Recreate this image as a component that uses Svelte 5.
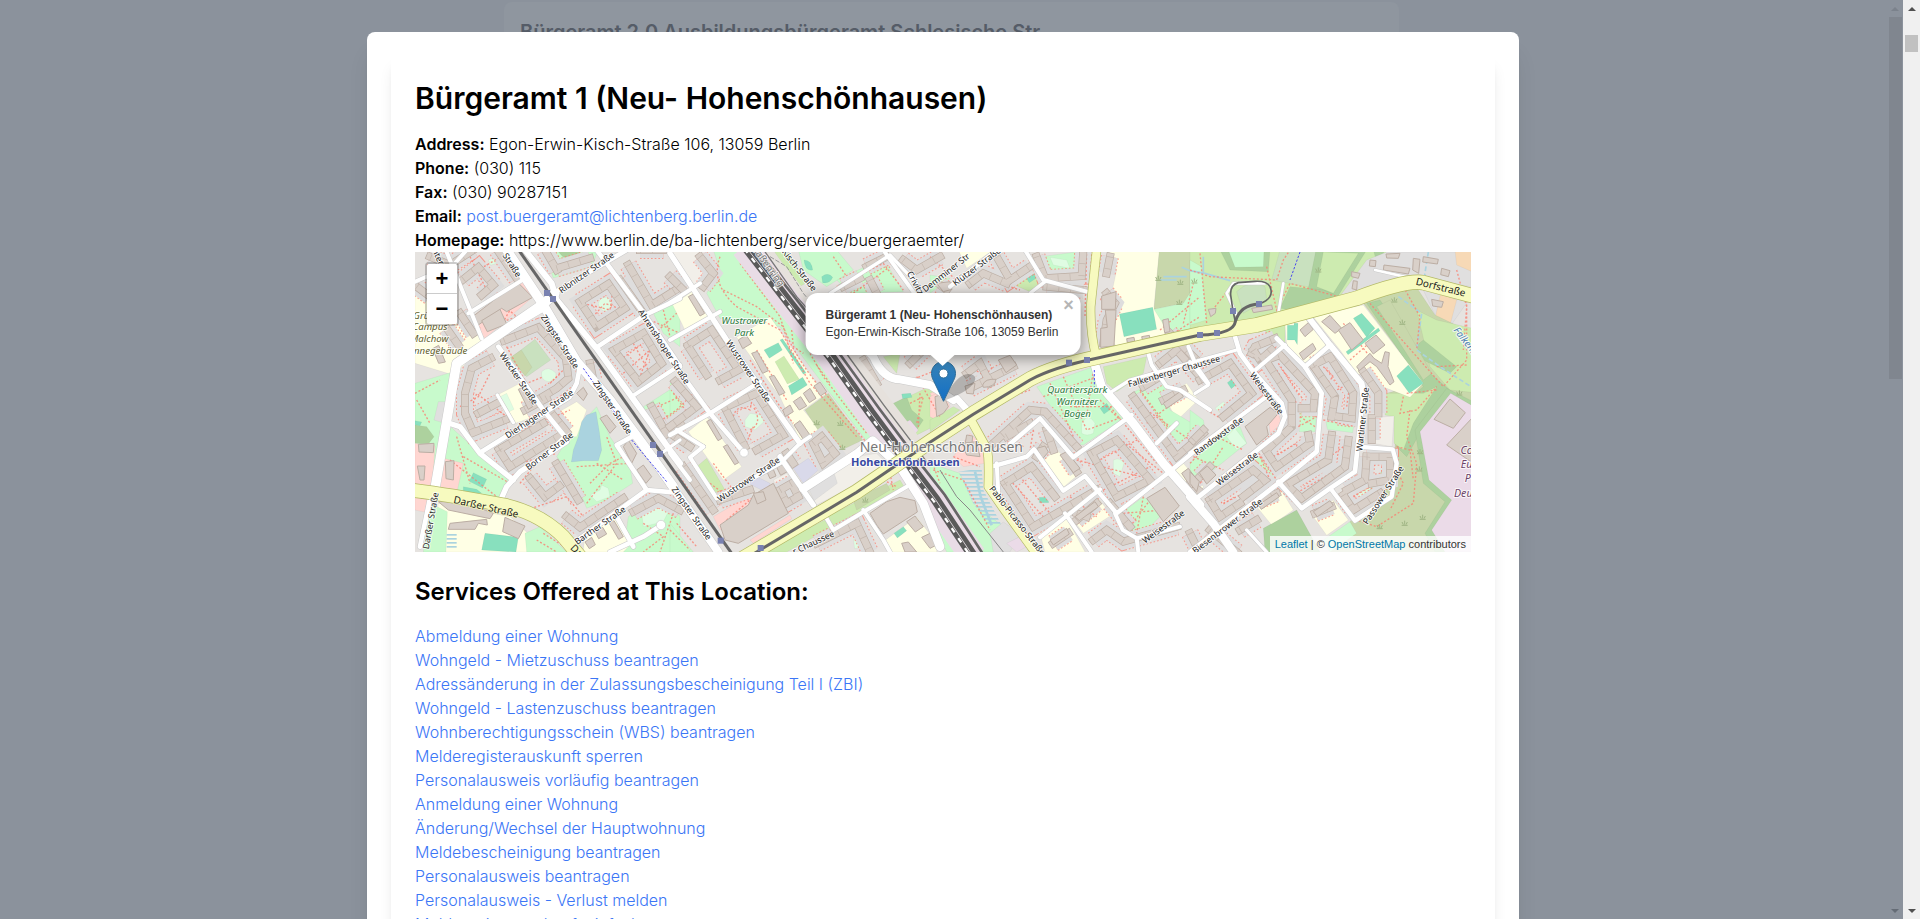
<script>
  const services = [
    'Abmeldung einer Wohnung',
    'Wohngeld - Mietzuschuss beantragen',
    'Adressänderung in der Zulassungsbescheinigung Teil I (ZBI)',
    'Wohngeld - Lastenzuschuss beantragen',
    'Wohnberechtigungsschein (WBS) beantragen',
    'Melderegisterauskunft sperren',
    'Personalausweis vorläufig beantragen',
    'Anmeldung einer Wohnung',
    'Änderung/Wechsel der Hauptwohnung',
    'Meldebescheinigung beantragen',
    'Personalausweis beantragen',
    'Personalausweis - Verlust melden',
    'Melderegisterauskunft einfach'
  ];

  // The map is drawn tile by tile; every tile is 780 units wide.
  const tile = (i) => `translate(${i * 780} 0)`;

  const colours = {
    land: '#f2efe9', park: '#c8facc', grass: '#cdebb0', wood: '#add19e', scrub: '#c8d7ab',
    school: '#ffffe5', pitch: '#88e0be', water: '#aad3df', retail: '#ffd6d1', plots: '#c9e1bf',
    works: '#ebdbe8', house: '#d9d0c9', farm: '#f7d9b6', lilac: '#d9d9ea', grey: '#e0dfdf', play: '#dffce2'
  };

  const areas = [
    [
      ['school', 'M15,135 L60,150 L235,280 L130,375 L15,340Z'],
      ['park', 'M15,400 L120,368 L110,520 L210,610 L310,690 L270,745 L15,720Z'],
      ['wood', 'M15,525 L50,530 L72,560 L55,582 L15,580Z'],
      ['pitch', 'M15,512 L35,516 L30,527 L15,524Z'],
      ['retail', 'M15,580 L75,588 L62,790 L15,780Z'],
      ['retail', 'M90,622 L160,640 L140,730 L80,720Z'],
      ['grey', 'M85,455 L108,455 L105,520 L72,510Z'],
      ['retail', 'M200,190 L340,90 L375,135 L225,265 L200,240Z'],
      ['school', 'M262,435 L330,400 L385,455 L400,490 L310,522Z'],
      ['plots', 'M300,325 L375,268 L422,330 L350,380Z'],
      ['scrub', 'M302,322 L334,300 L366,352 L345,378Z'],
      ['play', 'M395,365 Q415,345 438,370 Q440,395 415,395 Q390,390 395,365Z'],
      ['play', 'M270,440 L290,430 L312,478 L292,488Z'],
      ['park', 'M560,470 L600,560 L660,650 L668,700 L590,750 L530,775 L500,700 L440,620 L480,555Z'],
      ['school', 'M440,490 L500,455 L530,480 L500,560 L475,560Z'],
      ['water', 'M530,495 L558,485 L568,545 L575,600 L565,632 L520,632 L484,636 L490,600 L505,560 L515,515Z'],
      ['play', 'M540,735 L570,720 L575,705 L595,715 L600,740 L560,755Z'],
      ['pitch', 'M190,668 L230,688 L218,714 L178,694Z'],
      ['pitch', 'M160,710 L200,718 L215,730 L160,725Z'],
      ['school', 'M85,760 L300,800 L375,870 L380,906 L70,906Z'],
      ['park', 'M60,760 L112,785 L108,906 L40,906Z'],
      ['park', 'M345,850 L390,830 L470,906 L350,906Z'],
      ['pitch', 'M225,850 L325,862 L318,906 L215,900Z'],
      ['park', 'M400,0 L562,6 L545,50 L430,84Z'],
      ['wood', 'M440,0 L515,0 L500,24 L460,22Z'],
      ['park', 'M730,190 L810,145 L810,290 L760,250Z'],
      ['park', 'M700,470 L810,400 L810,560 L760,575Z'],
      ['park', 'M655,800 L720,750 L795,780 L810,800 L810,906 L640,906Z'],
      ['play', 'M695,790 L740,755 L780,775 L760,815 L700,830Z'],
      ['school', 'M525,850 L620,800 L665,880 L640,906 L520,906Z'],
      ['play', 'M565,160 Q570,138 598,142 Q615,165 592,185 Q565,182 565,160Z'],
      ['play', 'M235,30 L252,24 L260,40 L242,46Z']
    ],
    [
      ['land', 'M0,0 L90,0 L130,50 L70,120 L30,60Z'],
      ['park', 'M130,0 L220,0 L480,345 L640,590 L610,600 L480,430 L330,230 L250,215 L150,205 L110,130 L150,60Z'],
      ['school', 'M8,165 L70,122 L120,200 L45,240Z'],
      ['school', 'M200,262 L300,200 L440,400 L470,430 L400,480 L450,540 L390,570 L330,440Z'],
      ['grass', 'M315,335 L342,318 L388,388 L352,402Z'],
      ['pitch', 'M282,300 L325,278 L337,300 L298,325Z'],
      ['pitch', 'M355,408 L398,382 L412,405 L365,435Z'],
      ['pitch', 'M330,270 L338,266 L408,368 L400,373Z'],
      ['pitch', 'M120,62 L134,54 L146,74 L130,80Z'],
      ['scrub', 'M405,480 L475,430 L578,570 L490,612Z'],
      ['park', 'M0,400 L50,385 L90,470 L0,545Z'],
      ['school', 'M55,545 L110,500 L215,650 L160,690Z'],
      ['grass', 'M80,650 L110,625 L165,720 L130,730Z'],
      ['land', 'M310,690 L350,670 L410,750 L380,770 L340,760Z'],
      ['lilac', 'M370,655 L415,625 L445,660 L400,700Z'],
      ['lilac', 'M235,700 L260,680 L300,700 L290,728Z'],
      ['land', 'M415,720 L560,620 L620,610 L660,650 L440,765Z'],
      ['grey', 'M418,720 L492,668 L502,700 L432,752Z'],
      ['retail', 'M130,800 L240,735 L255,760 L150,840Z'],
      ['retail', 'M240,870 L360,795 L365,806 L250,880Z'],
      ['grass', 'M470,800 L690,690 L705,715 L590,775 L480,830Z'],
      ['scrub', 'M550,750 L650,700 L660,720 L560,780Z'],
      ['grass', 'M270,906 L465,810 L480,835 L350,906Z'],
      ['school', 'M640,875 L740,800 L800,880 L800,906 L660,906Z'],
      ['pitch', 'M672,850 L700,830 L710,842 L682,864Z'],
      ['park', 'M700,660 L810,760 L880,906 L830,906 L780,800Z'],
      ['park', 'M500,90 L640,25 L700,125 L540,130Z'],
      ['park', 'M385,0 L500,0 L550,60 L470,110 L400,60Z'],
      ['grass', 'M310,0 L350,0 L410,98 L385,112Z'],
      ['pitch', 'M402,30 Q425,30 428,60 Q405,65 402,30Z'],
      ['pitch', 'M455,80 Q475,65 488,82 Q480,102 458,98Z'],
      ['park', 'M0,820 L70,906 L0,906Z'],
      ['grass', 'M640,320 L690,310 L680,370Z'],
      ['grass', 'M650,470 L800,400 L810,520 L730,560Z'],
      ['wood', 'M650,470 L710,440 L725,480 L760,510 L740,540 L690,500Z'],
      ['retail', 'M780,430 L810,418 L810,490Z'],
      ['works', 'M690,525 L720,510 L745,540 L720,570Z'],
      ['pitch', 'M695,432 L722,430 L726,442 L698,446Z'],
      ['play', 'M225,510 L240,490 L272,495 L282,515 L255,540 L225,530Z'],
      ['play', 'M550,868 L570,864 L572,892 L554,896Z']
    ],
    [
      ['school', 'M85,0 L190,0 L110,55Z'],
      ['park', 'M0,75 L60,85 L0,130Z'],
      ['grass', 'M240,100 L300,55 L340,100 L300,125Z'],
      ['pitch', 'M283,75 L305,60 L318,85 L298,98Z'],
      ['park', 'M335,20 L445,5 L450,72 L360,76Z'],
      ['play', 'M360,22 L410,30 L420,55 L370,45Z'],
      ['school', 'M535,0 L688,6 L672,170 L740,290 L560,290 L515,230 L530,200 L560,60Z'],
      ['pitch', 'M568,192 L668,172 L680,238 L582,260Z'],
      ['scrub', 'M688,0 L810,0 L810,100 L760,160 L672,178Z'],
      ['park', 'M672,178 L760,160 L810,80 L810,235 L720,255Z'],
      ['park', 'M320,410 L490,350 L500,400 L590,500 L460,585 L430,580 L370,480Z'],
      ['play', 'M455,520 Q475,485 495,520 L490,550 Q470,560 455,550Z'],
      ['pitch', 'M510,475 L530,460 L542,478 L522,492Z'],
      ['grass', 'M130,375 L170,345 L205,375 L160,410Z'],
      ['retail', 'M0,440 L40,420 L60,470 L20,510 L0,500Z'],
      ['grass', 'M0,510 L70,470 L90,480 L0,545Z'],
      ['retail', 'M70,620 L120,550 L160,590 L165,640 L100,650Z'],
      ['park', 'M0,640 L90,670 L130,760 L215,826 L200,906 L120,906 L0,730Z'],
      ['grass', 'M520,350 L650,320 L640,370 L560,425 L530,400Z'],
      ['school', 'M340,630 L380,600 L455,665 L400,712Z'],
      ['school', 'M430,810 L500,740 L545,795 L460,850Z'],
      ['school', 'M330,850 L410,805 L465,906 L345,906Z'],
      ['school', 'M705,440 L770,400 L805,450 L740,512Z'],
      ['school', 'M725,670 L760,640 L820,710 L800,750 L760,720Z'],
      ['park', 'M605,430 L690,385 L715,430 L720,480 L820,540 L780,612 L690,520Z'],
      ['park', 'M560,800 L640,740 L700,790 L640,850 L580,840Z'],
      ['play', 'M550,630 Q570,620 582,640 L570,680 L550,670Z'],
      ['pitch', 'M328,742 L356,742 L356,758 L328,758Z'],
      ['grey', 'M180,850 L220,816 L270,850 L240,906 L190,906Z'],
      ['works', 'M230,880 L270,860 L290,890 L260,906Z']
    ],
    [
      ['grass', 'M0,0 L590,0 L580,50 L450,150 L340,190 L0,250Z'],
      ['park', 'M0,30 L35,50 L50,210 L0,225Z'],
      ['wood', 'M90,0 L240,0 L235,65 L120,60Z'],
      ['park', 'M115,0 L222,0 L220,50 L135,52Z'],
      ['plots', 'M270,0 L380,0 L362,112 L245,90Z'],
      ['wood', 'M378,0 L530,0 L440,145 L355,115Z'],
      ['grass', 'M400,6 L505,10 L430,130 L380,110Z'],
      ['wood', 'M300,110 L400,120 L470,150 L345,185 L270,175Z'],
      ['plots', 'M140,125 Q180,85 225,110 L230,150 L160,190Z'],
      ['wood', 'M550,0 L582,0 L578,25 L560,35Z'],
      ['grey', 'M530,30 L590,6 L843,6 L843,110 L665,80 L560,115 L450,138Z'],
      ['farm', 'M795,0 L870,0 L870,75 L800,45Z'],
      ['grey', 'M700,120 L843,140 L780,230 L735,195Z'],
      ['farm', 'M752,130 L800,150 L780,225 L735,205Z'],
      ['scrub', 'M520,160 L675,105 L735,195 L870,260 L870,906 L420,906 L480,815 L615,600 L615,500 L590,430 L700,400Z'],
      ['grass', 'M680,180 L740,210 L870,240 L870,430 L780,420 L720,350Z'],
      ['wood', 'M675,290 L700,270 L800,350 L780,370 L700,330Z'],
      ['wood', 'M530,160 L570,150 L720,370 L790,430 L760,470 L700,530 L650,620 L620,590 L640,460 L700,410Z'],
      ['scrub', 'M560,170 L600,150 L725,370 L700,390Z'],
      ['grass', 'M600,430 L700,430 L740,410 L670,520 L640,600 L612,580 L612,500 L585,495 L585,430Z'],
      ['wood', 'M770,415 L870,465 L870,906 L735,906 L705,850 L765,755 L700,700 L675,540Z'],
      ['works', 'M782,430 L870,480 L870,906 L765,906 L725,840 L785,750 L717,690 L690,545Z'],
      ['school', 'M365,195 L520,165 L700,400 L660,442 L590,415 L500,370 L450,300Z'],
      ['school', 'M285,225 L350,205 L430,280 L340,342 L290,285Z'],
      ['grass', 'M220,230 L285,220 L285,280 L240,270Z'],
      ['pitch', 'M292,226 L312,226 L312,220 L324,220 L322,284 L314,270 L292,270Z'],
      ['pitch', 'M490,205 L515,190 L555,235 L530,262Z'],
      ['pitch', 'M468,305 L565,234 L570,242 L474,314Z'],
      ['pitch', 'M620,378 L655,345 L700,400 L658,430Z'],
      ['land', 'M555,503 L612,498 L606,590 L550,580Z'],
      ['park', 'M325,488 L380,488 L375,545 L328,545Z'],
      ['park', 'M408,515 L492,520 L488,548 L412,538Z'],
      ['park', 'M0,640 L90,540 L150,530 L170,580 L70,660 L0,680Z'],
      ['park', 'M190,625 L220,618 L260,680 L240,690Z'],
      ['play', 'M110,560 L135,535 L170,580 L140,600Z'],
      ['park', 'M0,480 L40,510 L50,560 L0,590Z'],
      ['school', 'M200,770 L270,715 L310,780 L245,825Z'],
      ['wood', 'M220,835 L320,780 L390,906 L225,906Z'],
      ['school', 'M370,800 L430,750 L475,810 L410,856Z'],
      ['park', 'M400,870 L480,815 L500,850 L420,906Z'],
      ['retail', 'M235,500 L265,490 L275,520 L240,550Z'],
      ['school', 'M0,680 L30,700 L20,740 L0,740Z'],
      ['pitch', 'M112,398 L125,388 L138,404 L124,416Z'],
      ['play', 'M75,475 L100,455 L112,470 L90,490Z'],
      ['play', 'M500,735 L535,708 L542,716 L512,740Z'],
      ['play', 'M437,378 L448,382 L460,406 L440,400Z']
    ]
  ];

  // Centre lines of apartment blocks.
  const blocks = [
    [
      'M160,88 L205,52 L250,105 L215,135', 'M262,0 L320,85', 'M190,0 L120,45 L60,20', 'M20,110 L60,140', 'M110,235 L145,285', 'M150,190 L190,250',
      'M242,325 L185,355 L165,430 L165,490 L190,548 L285,510', 'M205,490 L265,458', 'M282,272 L385,232 L468,325 L475,385 L440,415 L385,448',
      'M345,480 L410,445', 'M268,598 L400,520', 'M268,600 L300,650 L445,560', 'M425,490 L470,545',
      'M360,685 L405,740 L448,708', 'M440,642 L505,750', 'M470,800 L510,832 L640,745', 'M440,55 L540,25', 'M405,0 L440,60',
      'M510,155 L595,102 L645,175 L560,230Z', 'M612,300 L700,250 L755,340 L685,395Z', 'M655,45 L725,165 L800,118', 'M690,0 L760,0',
      'M725,470 L770,552 L810,520', 'M670,785 L745,745 L810,780', 'M540,340 L550,390', 'M630,90 L700,190'
    ],
    [
      'M0,80 L40,120', 'M90,20 L130,70 L100,110', 'M55,285 L125,240 L205,360 L150,390', 'M55,290 L110,375', 'M15,395 L80,470 L0,530', 'M170,470 L260,430 L340,555 L260,600', 'M168,480 L225,590',
      'M15,560 L60,590', 'M40,650 L130,780', 'M150,750 L240,720', 'M350,610 L370,640', 'M430,580 L455,560 L495,610 L460,640Z', 'M330,720 L365,700 L385,740 L350,760Z',
      'M440,880 L560,820 L600,906', 'M590,50 L650,20', 'M520,110 L570,85', 'M600,90 L620,130', 'M720,340 L760,300', 'M580,330 L620,400', 'M700,30 L740,60 L810,20', 'M540,180 L570,240'
    ],
    [
      'M30,105 L50,120', 'M120,100 L160,70 L230,100', 'M200,20 L240,90 L300,50', 'M320,20 L345,85 L455,78 L460,0', 'M350,110 L460,120', 'M540,20 L530,70', 'M530,130 L555,160 L530,210 L520,280',
      'M110,370 L150,340 L180,400', 'M120,415 L250,350', 'M190,580 L300,480 L345,485 L440,590', 'M230,560 L300,520', 'M350,540 L370,600', 'M340,590 L320,620',
      'M225,700 L305,650 L375,740', 'M225,700 L310,830 L500,720', 'M485,610 L560,570 L660,690 L560,740Z', 'M410,620 L440,665', 'M640,410 L690,380', 'M610,440 L740,620 L820,550', 'M690,340 L740,300 L810,380', 'M720,250 L800,330',
      'M700,450 L760,420', 'M490,870 L530,840 L580,875 L740,830', 'M370,880 L415,850', 'M440,810 L500,760', 'M440,790 L470,800', 'M540,760 L600,830'
    ],
    [
      'M185,310 L195,290 L255,265', 'M190,300 L210,330 L245,300', 'M30,390 L120,340 L185,430 L100,500', 'M230,330 L270,315 L375,430 L370,475 L335,475', 'M230,335 L305,450 L305,530 L230,600', 'M230,605 L260,650 L360,580 L355,555',
      'M370,345 L420,320 L490,430 L485,505 L445,500', 'M372,350 L435,440 L425,500', 'M425,555 L415,630 L290,705 L335,745 L465,650 L475,570', 'M520,365 L565,430 L565,490', 'M545,505 L545,570',
      'M530,620 L600,620 L600,690 L545,700', 'M530,620 L525,690 L470,720', 'M460,735 L490,780 L570,730', 'M60,750 L190,660 L225,690 L160,740', 'M60,750 L90,800 L150,760', 'M0,850 L20,890', 'M150,840 L200,810',
      'M30,680 L60,650', 'M10,570 L40,540', 'M60,840 L140,906', 'M375,790 L425,770', 'M210,750 L260,730', 'M0,700 L25,720'
    ]
  ];

  // Detached buildings drawn to their outline.
  const houses = [
    [
      'M188,200 L322,96 L368,142 L290,185 L275,175 L205,225Z', 'M215,212 L270,178 L290,222 L232,245Z', 'M85,755 L160,755 L250,790 L240,806 L115,780Z', 'M120,820 L230,808 L232,825 L205,820 L195,838 L115,838Z', 'M285,802 L345,828 L325,866 L278,845Z', 'M22,648 L45,648 L42,690 L30,690Z', 'M106,635 L132,632 L130,690 L108,686Z',
      'M325,418 L338,412 L368,470 L355,478Z', 'M500,430 L520,412 L532,432 L520,452Z', 'M570,505 L590,495 L618,530 L600,550Z', 'M640,590 L655,570 L680,610 L665,640Z', 'M680,660 L700,645 L725,680 L708,700Z', 'M525,876 L545,862 L556,884 L538,896Z', 'M555,845 L578,832 L590,852 L566,866Z', 'M598,820 L612,812 L640,860 L626,868Z', 'M25,583 L72,580 L70,608 L27,606Z', 'M68,296 L86,286 L106,336 L86,340Z'
    ],
    [
      'M55,140 L70,132 L104,190 L90,198Z', 'M205,270 L228,255 L245,280 L218,296Z', 'M245,310 L262,304 L295,362 L278,370Z', 'M298,380 L312,376 L345,428 L328,436Z', 'M370,455 L392,440 L410,468 L388,480Z', 'M400,430 L420,415 L438,445 L418,458Z', 'M432,408 L450,396 L470,425 L452,438Z', 'M372,525 L390,512 L420,555 L400,568Z', 'M338,480 L360,465 L370,485 L346,500Z',
      'M110,515 L122,508 L156,565 L144,572Z', 'M160,590 L172,584 L206,638 L194,644Z', 'M150,825 L235,765 L250,735 L310,700 L355,790 L205,880 L165,870Z', 'M250,730 L280,725 L288,750 L262,762Z', 'M292,668 L310,658 L318,678 L300,686Z', 'M320,652 L340,642 L352,665 L332,676Z', 'M600,790 L650,755 L690,742 L735,752 L742,786 L640,852 L620,825Z', 'M710,815 L735,798 L760,830 L736,846Z', 'M755,862 L780,850 L800,885 L780,895Z', 'M695,880 L715,876 L740,906 L705,906Z', 'M615,432 L632,430 L630,445Z'
    ],
    [
      'M105,408 L135,400 L130,432 L110,430Z', 'M158,405 Q165,385 198,388 Q195,412 160,412Z', 'M205,330 L240,316 L260,345 L228,368Z', 'M15,440 L40,432 L55,470 L40,490 L20,500Z', 'M515,138 L558,125 L556,178 L515,178Z', 'M526,180 L558,180 L552,288 L512,292 L512,235 L532,232Z', 'M698,210 L715,206 L720,245 L704,248Z',
      'M110,555 L128,558 L126,580 L106,578Z', 'M95,580 L140,575 L150,620 L110,615Z', 'M320,595 L345,588 L355,606 L338,626Z', 'M390,615 L410,605 L450,655 L430,668Z', 'M435,800 L495,755 L505,770 L448,812Z', 'M360,870 L410,835 L418,852 L370,885Z', 'M650,745 L705,712 L748,768 L700,815Z', 'M755,670 L775,655 L805,695 L785,715Z', 'M700,460 L750,425 L760,440 L710,475Z', 'M590,266 L612,262 L614,274 L592,278Z', 'M635,260 L658,256 L660,268 L638,272Z', 'M20,100 L60,95 L66,118 L40,125Z'
    ],
    [
      'M395,215 L420,196 L455,235 L435,250Z', 'M445,240 L480,218 L520,270 L485,300Z', 'M525,280 L558,255 L585,285 L550,312Z', 'M500,350 L540,310 L552,325 L575,340 L585,305 L598,308 L594,350 L612,395 L600,405 L560,350 L540,335 L508,362Z', 'M330,240 L355,218 L370,238 L345,260Z', 'M328,310 L368,280 L378,298 L340,330Z',
      'M165,530 L240,472 L265,490 L230,530 L235,555 L200,585Z', 'M732,508 L780,447 L826,488 L790,535Z', 'M770,585 L850,500 L850,640Z', 'M370,785 L420,752 L430,766 L382,800Z', 'M205,765 L260,728 L268,740 L214,778Z', 'M28,668 L52,648 L78,675 L50,702Z', 'M0,665 L28,695 L20,725 L0,700Z',
      'M588,12 L630,10 L625,25 L590,24Z', 'M582,45 L660,55 L655,72 L580,60Z', 'M540,30 L558,32 L556,50 L538,48Z', 'M485,65 L510,70 L505,85 L485,80Z', 'M490,92 L502,94 L500,120 L486,116Z', 'M700,20 L745,28 L742,42 L698,36Z', 'M755,55 L780,62 L775,80 L752,74Z', 'M670,25 L690,28 L686,70 L668,60Z', 'M725,148 L760,155 L755,172 L728,168Z', 'M185,175 L245,165 L248,178 L190,188Z', 'M55,178 L78,175 L76,190 L62,200Z'
    ]
  ];

  // White streets: width, path.
  const streets = [
    [
      [28, 'M75,715 L140,340 L235,275 L405,158 L435,130'], [12, 'M110,6 L215,265'], [12, 'M15,95 L130,45 L170,0'], [12, 'M175,190 L345,85'], [18, 'M345,0 L425,100 L440,150 L560,295 L665,440 L780,600 L810,640'],
      [28, 'M290,0 L400,165 L500,335 L600,450 L700,585 L790,710'], [14, 'M430,130 L650,0'], [14, 'M560,0 L590,40 L705,195 L790,320 L810,350'], [14, 'M560,292 L705,195 L810,145'], [12, 'M665,440 L810,345'],
      [14, 'M265,290 L400,480 L465,560 L440,585'], [14, 'M210,608 L478,442 L500,400 L510,350'], [10, 'M262,435 L310,518'], [10, 'M235,275 L290,245 L400,180'], [16, 'M125,522 L150,530 L210,610 L310,690'], [16, 'M272,750 L290,710 L330,665 L470,575'],
      [14, 'M665,560 L620,585 L710,720 L800,728'], [14, 'M490,880 L710,720'], [14, 'M600,906 L700,860 L755,825'], [14, 'M620,800 L670,890'], [14, 'M60,745 L30,890'], [10, 'M740,620 L810,570']
    ],
    [
      [16, 'M0,10 L170,270 L390,580'], [12, 'M0,158 L90,100'], [12, 'M0,270 L150,185'], [14, 'M0,325 L120,490 L222,608'], [13, 'M0,555 L120,490 L270,395'], [12, 'M100,590 L60,622 L140,745 L330,640 L390,580 L420,560'], [12, 'M20,540 L100,590'],
      [26, 'M400,715 L560,612 L608,572 L690,650 L760,760 L810,890'], [16, 'M330,620 L430,765'], [12, 'M455,780 L490,840 L590,780 L710,710'], [12, 'M580,780 L640,870 L660,906'], [24, 'M0,700 L120,870 L145,906'], [24, 'M590,300 L610,320 Q640,388 690,388 L780,405 L850,450'], [12, 'M0,610 L60,690'], [10, 'M480,130 L660,15 L740,100'], [12, 'M640,0 L740,140']
    ],
    [
      [12, 'M60,110 L200,0'], [12, 'M285,0 L340,90 L470,125'], [10, 'M300,130 L345,95'], [26, 'M495,345 L515,410 L610,520 L700,640 L810,765'], [13, 'M240,582 L330,505 L430,622 L605,495'], [13, 'M185,650 L290,620 L312,598 L400,722 L465,678 L560,790 L710,672 L810,590'], [12, 'M200,640 L205,730'], [12, 'M330,862 L510,718'], [12, 'M405,790 L485,906'],
      [12, 'M555,790 L578,840 L620,865 L750,830'], [10, 'M545,425 L600,390 L810,330 L920,300'], [12, 'M655,310 L665,345 L710,410 L750,420 L840,480'], [10, 'M600,500 L690,615'], [12, 'M775,290 L800,350 L835,400'], [20, 'M80,445 L130,500'], [12, 'M620,865 L625,906'], [13, 'M740,520 L680,580']
    ],
    [
      [14, 'M135,260 L150,310 L190,365 L275,460 L285,500 L265,550 L20,745'], [12, 'M190,365 L285,285'], [14, 'M260,265 L345,350 L395,430 L380,605 L265,700 L0,906'], [14, 'M345,350 L420,285'], [18, 'M350,195 L420,285 L515,400 L520,440'], [14, 'M520,430 L495,665 L420,715 L335,775 L265,695'],
      [13, 'M505,590 L608,598 L620,640 L605,740 L495,812 L425,720'], [12, 'M0,610 L230,440'], [10, 'M0,335 L55,405 L15,430'], [24, 'M0,740 L70,820 L130,906'], [10, 'M170,840 L230,906'], [8, 'M555,60 L665,85'], [8, 'M280,100 L265,190'], [8, 'M140,195 L110,130 L130,100 L225,100']
    ]
  ];

  const footpaths = [
    [
      'M150,470 L205,440 L240,370', 'M190,460 L200,430 L290,500', 'M540,700 L600,640 L660,610 M500,650 L660,640 M530,760 L620,640 L590,560 M560,640 L640,690', 'M520,160 L600,180 L610,110 M540,210 L585,160 L640,180', 'M630,330 L700,280 M640,370 L720,300 L690,380 M670,280 L720,370', 'M720,210 L810,250 M760,180 L780,260 M735,250 L800,190', 'M290,650 L440,610 M330,700 L370,650 M350,780 L470,740 L520,800', 'M120,630 L260,740 M140,560 L180,700 M160,620 L300,700', 'M380,870 L440,906 M400,850 L480,900', 'M720,480 L810,440 M740,520 L800,480', 'M180,20 L230,120 M170,80 L290,10', 'M700,820 L760,860 L700,906 M790,790 L750,906', 'M285,170 L320,200 L280,215 L300,180', 'M20,450 L60,520 M15,430 L90,390', 'M290,290 L350,400 L400,380 M310,550 L480,480 M420,400 L460,360'
    ],
    [
      'M150,20 Q120,100 200,170 L330,240 L420,400 L560,560', 'M230,60 L400,270 L610,560', 'M210,40 L330,200 Q360,300 440,400 L600,590', 'M160,120 L260,170 L340,230 L370,340 M365,240 L370,290 L400,310', 'M240,330 L330,470 L370,520 M260,300 L350,450', 'M420,310 L460,380 L590,550 M440,345 L480,400', 'M190,500 Q200,460 240,480 L250,430 M250,530 L220,600 M240,540 Q280,520 250,470', 'M10,430 L60,500 M20,480 L70,430', 'M130,640 L190,720 L240,680 M120,700 L160,730', 'M640,690 L680,710 M660,670 L670,720', 'M740,380 L810,500 M720,460 L760,440 L740,520 M700,400 L800,360 M750,430 L745,530', 'M720,560 L780,620 L810,700', 'M500,110 L640,40 L700,120 M550,130 L660,50 M490,20 L530,80', 'M170,810 L240,750 L330,730', 'M0,840 L60,900 M20,820 L80,890', 'M420,830 L470,800 L490,870'
    ],
    [
      'M360,400 L430,560 M340,440 L500,380 M400,380 L470,540 L580,500 M420,470 L560,470 M490,360 L470,500', 'M450,600 L580,510 M440,630 L670,690', 'M620,460 L780,570 M650,520 L740,450 M630,420 L720,540', 'M580,790 L700,780 M600,830 L660,750 M640,740 L620,850', 'M120,350 L200,400 M140,400 L190,350', 'M220,540 L280,590 M310,540 L300,600', 'M240,690 L340,800 M270,680 L360,790', 'M690,240 L810,140 M760,220 L790,100 M730,250 L810,200', 'M510,20 L480,130 M470,0 L465,200', 'M10,660 L100,690 L180,840 M70,620 L150,650', 'M180,440 L310,400 M160,470 L300,420', 'M490,640 L640,560 M520,720 L660,650', 'M540,470 L680,640 M510,450 L570,510', 'M0,20 L90,100 M210,100 L270,120', 'M420,740 L500,800 M560,560 L700,670'
    ],
    [
      'M30,10 L50,220 M0,60 L60,80 L260,90 M60,190 L130,100', 'M260,90 L280,30 L300,0 M230,50 L260,180 L300,100 L480,150', 'M540,160 Q600,230 760,410 L830,330 L830,150', 'M640,110 L690,200 L680,300', 'M650,430 L740,420 M640,440 L630,490 L680,480 L740,410', 'M620,590 L660,600 L670,690 M660,480 L650,560 L680,640 L670,760 L560,830 L500,810', 'M610,640 L640,700 L600,780', 'M800,60 L830,170 L820,300 M740,350 L830,345', 'M265,340 L340,450 M260,360 L320,460', 'M400,350 L430,380 L410,400 M420,430 L480,400 L470,470', 'M250,620 L320,580 L320,600 L260,640', 'M0,640 L80,560 L160,600 M30,700 L100,590 M10,620 L100,660', 'M200,600 L260,690 M210,620 L240,690', 'M330,500 L375,530 M325,530 L380,500 M400,510 L495,530', 'M340,680 L460,590 M300,740 L440,660', 'M490,740 L560,700 M100,760 L200,710', 'M50,480 L100,510 L180,440', 'M480,330 L560,260 M460,220 L540,320'
    ]
  ];

  const streetNames = [
    [0, 306, 45, 57, 'Straße'], [0, 529, 68, -35, 'Ribnitzer Straße'], [0, 450, 275, 57, 'Zingster Straße'], [0, 608, 472, 56, 'Zingster Straße'], [0, 326, 385, 56, 'Wiecker Straße'], [0, 388, 492, -34, 'Dierhagener Straße'], [0, 418, 603, -37, 'Borner Straße'], [0, 570, 826, -35, 'Barther Straße'], [0, 62, 812, -80, 'Darßer Straße'],
    [0, 85, 20, 65, 'hter'], [1, -18, 290, 57, 'Ahrenshooper Straße'], [1, 235, 363, 56, 'Wustrower Straße'], [1, 236, 688, -34, 'Wustrower Straße'], [1, 65, 790, 55, 'Zingster Straße'], [1, 430, 878, -25, 'r Chaussee'], [1, 388, 60, 52, 'Kisch-Straße'], [1, 742, 110, 62, 'Crivitzer'], [1, 828, 68, -38, 'Demminer Str'], [2, 140, 50, -37, 'Klützer Straße'],
    [2, 262, 812, 52, 'Pablo-Picasso-Straße'], [2, 732, 364, -16, 'Falkenberger Chaussee'], [2, 700, 830, -36, 'Weisestraße'], [3, 230, 430, 53, 'Weisestraße'], [3, 86, 558, -36, 'Randowstraße'], [3, 141, 656, -37, 'Weisestraße'], [3, 112, 828, -37, 'Biesenbrower Straße'], [3, 518, 508, -84, 'Wartiner Straße'], [3, 580, 735, -57, 'Passower Straße']
  ];

  const stops = [
    [411, 129], [429, 147], [729, 585], [750, 612], [932, 872], [1052, 894], [1977, 338], [2031, 330], [2370, 255], [2421, 249], [2469, 183], [2547, 162]
  ];

  const tufts = [[1220, 518], [1291, 520], [1297, 592], [1366, 750], [2245, 85], [2311, 97], [2353, 93], [2308, 157], [2725, 60], [2953, 150], [2977, 217], [3030, 605], [3028, 657], [3038, 802], [2984, 820], [2909, 830], [3148, 429]];
</script>

<div class="page">
  <main class="backdrop-page" aria-hidden="true">
    <section class="result"><h2>Bürgeramt 2.0 Ausbildungsbürgeramt Schlesische Str.</h2></section>
  </main>

  <div class="overlay">
    <div class="dialog" role="dialog" aria-modal="true" aria-labelledby="office">
      <article class="card">
        <h1 id="office">Bürgeramt 1 (Neu- Hohenschönhausen)</h1>
        <p><strong>Address:</strong> Egon-Erwin-Kisch-Straße 106, 13059 Berlin</p>
        <p><strong>Phone:</strong> (030) 115</p>
        <p><strong>Fax:</strong> (030) 90287151</p>
        <p><strong>Email:</strong> <a href="mailto:post.buergeramt@lichtenberg.berlin.de">post.buergeramt@lichtenberg.berlin.de</a></p>
        <p><strong>Homepage:</strong> https://www.berlin.de/ba-lichtenberg/service/buergeraemter/</p>

        <div class="map">
          <svg class="tiles" viewBox="15 6 3168 900" preserveAspectRatio="xMidYMid slice" aria-hidden="true">
            <defs>
              <pattern id="reeds" width="40" height="12" patternUnits="userSpaceOnUse"><rect width="40" height="5" fill="#aad3df" /></pattern>
            </defs>
            <rect x="0" y="0" width="3240" height="920" fill="#e6e3e0" />
            {#each areas as list, i}
              <g transform={tile(i)}>
                {#each list as [kind, d]}<path {d} fill={colours[kind]} stroke="#000" stroke-opacity=".06" stroke-width="2" />{/each}
              </g>
            {/each}
            <path d="M1645,665 L1715,655 L1720,720 L1775,826 L1735,826 L1690,760Z" fill="url(#reeds)" />
            <path d="M1695,665 L1712,740 L1745,826" fill="none" stroke="#aad3df" stroke-width="8" />
            <path d="M110,850 h30 v50 h-30Z" fill="url(#reeds)" />
            <path d="M2260,80 h70 M2250,90 h50 M2315,52 L2340,62 L2385,70 L2460,92 M2380,20 v50" fill="none" stroke="#aad3df" stroke-width="5" />
            <path d="M2965,140 L3035,190 L3020,300 L3090,350 L3183,410 M3055,6 L3040,100" fill="none" stroke="#aad3df" stroke-width="5" stroke-dasharray="14 8" />

            {#each blocks as list, i}
              <g transform={tile(i)} fill="none">
                {#each list as d}<path {d} stroke="#fa8072" stroke-width="54" stroke-dasharray="5 6" opacity=".75" />{/each}
                {#each list as d}<path {d} stroke="#dedddd" stroke-width="48" />{/each}
              </g>
            {/each}
            {#each footpaths as list, i}
              <g transform={tile(i)} class="foot">{#each list as d}<path {d} />{/each}</g>
            {/each}
            {#each blocks as list, i}
              <g transform={tile(i)} fill="none">
                {#each list as d}<path {d} stroke="#bcaea4" stroke-width="24" stroke-linecap="square" />{/each}
                {#each list as d}<path {d} stroke="#d9d0c9" stroke-width="20" stroke-linecap="square" />{/each}
                {#each list as d}<path {d} stroke="#c4b8af" stroke-width="20" stroke-dasharray="2 34" />{/each}
              </g>
            {/each}
            {#each houses as list, i}
              <g transform={tile(i)} fill="#d9d0c9" stroke="#bcaea4" stroke-width="3">{#each list as d}<path {d} />{/each}</g>
            {/each}

            <g fill="none">
              <path d="M1050,0 L1300,310 L1430,480 L1560,650" stroke="#e6e1dc" stroke-width="56" />
              <path d="M1002,-10 L1262,322 L1376,486 L1506,664 L1570,748 L1690,920" stroke="#e9dce6" stroke-width="80" />
              <path d="M1007,-10 L1264,322 L1380,486 L1512,664 L1576,748 L1690,920" stroke="#5a5a5a" stroke-width="30" />
              <path d="M1007,-10 L1264,322 L1380,486 L1512,664 L1576,748 L1690,920" stroke="#d6d0d4" stroke-width="3" />
              <path d="M1003,-4 L1260,328 L1376,492 L1508,670 L1572,754 L1686,926" stroke="#fff" stroke-width="7" stroke-dasharray="16 20" />
              <path d="M1034,-10 L1292,316 L1408,476 L1538,650 L1604,734 L1724,920" stroke="#666" stroke-width="8" />
              <path d="M1040,-30 L1160,140 L1306,306 L1422,466 L1552,638" stroke="#777" stroke-width="4" />
              <path d="M1590,660 L1640,740 L1680,780 L1780,906" stroke="#888" stroke-width="3" />
              <path d="M1080,20 L1130,50 L1180,130 L1230,190" stroke="#999" stroke-width="3" stroke-dasharray="14 5" />
            </g>

            {#each streets as list, i}
              <g transform={tile(i)} class="line">{#each list as [w, d]}<path {d} stroke="#c9c9c9" stroke-width={w + 3} />{/each}</g>
            {/each}
            {#each streets as list, i}
              <g transform={tile(i)} class="line">{#each list as [w, d]}<path {d} stroke="#fff" stroke-width={w} />{/each}</g>
            {/each}
            <circle cx="1002" cy="608" r="13" fill="#fff" stroke="#ccc" stroke-width="2" />
            <circle cx="753" cy="825" r="14" fill="#fff" stroke="#ccc" stroke-width="2" />

            <g class="line">
              {#each [['#b3b966', 4], ['#f7fabf', 0]] as [colour, extra]}
                <g stroke={colour}>
                  <path d="M1680,505 L1730,595 Q1738,620 1735,710 L1780,775 L1885,920" stroke-width={24 + extra} />
                  <path d="M2060,0 L2042,170 Q2040,250 2060,325" stroke-width={24 + extra} />
                  <path d="M0,720 Q110,733 280,765 Q390,790 460,860 L510,920" stroke-width={40 + extra} />
                  <path d="M990,930 L1340,725 L1560,575 L1690,490 L1860,387 Q1930,350 2060,322 L2370,252 L2540,225 L2840,145 Q2990,88 3040,98 L3190,138" stroke-width={42 + extra} />
                </g>
              {/each}
            </g>
            <g fill="none" stroke="#666" stroke-width="9" stroke-linejoin="round">
              <path d="M326,0 L1000,960" />
              <path d="M1000,930 L1340,727 L1560,577 L1690,493 L1860,390 Q1930,352 2060,325 L2370,255 Q2470,252 2476,215 Q2490,165 2547,162" />
              <path d="M2547,162 Q2595,145 2580,110 Q2570,92 2535,94 L2485,98 Q2460,105 2462,135 L2469,183 L2476,215" stroke-width="5" />
            </g>
            <path d="M520,355 L645,530 M665,570 L770,695 M2670,6 L2640,90 M2053,360 v50" fill="none" stroke="#4848ee" stroke-width="3" stroke-dasharray="7 5" />
            {#each stops as [x, y]}<rect x={x - 9} y={y - 9} width="18" height="18" fill="#7981b0" />{/each}
            <g fill="none" stroke="#9fb584" stroke-width="3">
              {#each tufts as [x, y]}<path d="M{x - 9},{y + 6} h18 M{x - 4},{y + 4} l-4,-8 M{x},{y + 4} v-12 M{x + 4},{y + 4} l4,-8" />{/each}
            </g>

            <g class="street-name">
              {#each streetNames as [t, x, y, angle, name]}
                <text transform="translate({x + t * 780} {y}) rotate({angle})" dy="9">{name}</text>
              {/each}
            </g>
            <g class="street-name large">
              <text transform="translate(228 771) rotate(13)" dy="10">Darßer Straße</text>
              <text transform="translate(3092 112) rotate(14)" dy="10">Dorfstraße</text>
              <text transform="translate(500 902) rotate(45)" dy="10">Da</text>
            </g>
            <g class="place-name school-name">
              <text x="34" y="206">Grü</text><text x="60" y="241">Campus</text><text x="58" y="276">Malchow</text><text x="74" y="311">Hannegebäude</text>
            </g>
            <g class="place-name park-name">
              <text x="1003" y="223">Wustrower</text><text x="1003" y="259">Park</text>
              <text x="2002" y="430">Quartierspark</text><text x="2002" y="466">Warnitzer</text><text x="2002" y="502">Bogen</text>
            </g>
            <g class="place-name works-name">
              <text x="3170" y="612">Co</text><text x="3170" y="654">Eu</text><text x="3173" y="697">P</text><text x="3160" y="741">Deu</text>
            </g>
            <text class="place-name water-name" transform="translate(3160 280) rotate(52)">Falkenb</text>
            <text class="place-name area-name" transform="translate(1069 57) rotate(54)">raßenring</text>
            <text class="district" x="1594" y="605">Neu-Hohenschönhausen</text>
            <text class="station" x="1486" y="648">Hohenschönhausen</text>
          </svg>

          <div class="zoom">
            <button type="button" aria-label="Zoom in">+</button>
            <button type="button" aria-label="Zoom out">−</button>
          </div>

          <svg class="marker" viewBox="0 0 25 41" aria-hidden="true">
            <defs><linearGradient id="pin" x2="0" y2="1"><stop stop-color="#3883b7" /><stop offset="1" stop-color="#126fc6" /></linearGradient></defs>
            <path d="M12.5 .5C5.8.5.5 5.8.5 12.5c0 2.5.8 4.7 2 7.1l10 20.7 10-20.7c1.200-2.400 2-4.600 2-7.100C24.500 5.800 19.200.5 12.500.5Z" fill="url(#pin)" stroke="#2e6c97" />
            <circle cx="12.500" cy="12.500" r="4.500" fill="#fff" stroke="#2e6c97" />
          </svg>
          <svg class="marker-shadow" viewBox="0 0 41 41" aria-hidden="true"><path d="M2 40 Q16 12 28 13 Q38 14 32 23 Q25 32 2 40Z" fill="#000" opacity=".22" /></svg>

          <div class="popup">
            <b>Bürgeramt 1 (Neu- Hohenschönhausen)</b>
            <span>Egon-Erwin-Kisch-Straße 106, 13059 Berlin</span>
            <button type="button" aria-label="Close popup">×</button>
          </div>

          <div class="credit"><a href="#leaflet">Leaflet</a> | © <a href="#osm">OpenStreetMap</a> contributors</div>
        </div>

        <h2>Services Offered at This Location:</h2>
        <ul>
          {#each services as service}<li><a href="#service">{service}</a></li>{/each}
        </ul>
      </article>
    </div>
  </div>

  <div class="bar inner" aria-hidden="true"><i class="up"></i><i class="thumb"></i><i class="down"></i></div>
  <div class="bar outer" aria-hidden="true"><i class="up"></i><i class="thumb"></i><i class="down"></i></div>
</div>

<style>
  :global(body) { margin: 0; background: #8b929c; }
  .page {
    height: 100vh;
    display: grid;
    grid-template-columns: 1fr 16px 17px;
    overflow: hidden;
    position: relative;
    background: #8b929c;
    color: #000;
    font: 300 16px/24px Inter, "Liberation Sans", sans-serif;
    font-optical-sizing: none;
  }
  h1, h2, p, ul { margin: 0; padding: 0; }
  a { color: #3b76f6; text-decoration: none; }
  .backdrop-page { grid-column: 1; grid-row: 1; padding: 2px 488px 0 504px; }
  .result { height: 200px; padding: 16px; border-radius: 8px; background: #8f969f; box-sizing: border-box; }
  .result h2 { margin: 0; color: #555c67; font-size: 20px; line-height: 28px; font-weight: 600; }
  .overlay { position: absolute; inset: 0 34px 0 0; padding-top: 32px; box-sizing: border-box; overflow: hidden; }
  .dialog {
    width: 1152px;
    max-width: 90%;
    margin: 0 auto;
    padding: 24px;
    box-sizing: border-box;
    background: #fff;
    border-radius: 8px;
    box-shadow: 0 20px 25px -5px rgba(0, 0, 0, .1), 0 8px 10px -6px rgba(0, 0, 0, .1);
  }
  .card { padding: 24px; border-radius: 8px; box-shadow: 0 10px 15px -3px rgba(0, 0, 0, .1), 0 4px 6px -4px rgba(0, 0, 0, .1); }
  h1 { font-size: 30px; line-height: 36px; font-weight: 600; margin-bottom: 16px; }
  h2 { font-size: 24px; line-height: 32px; font-weight: 600; margin: 24px 0 16px; }
  strong { font-weight: 600; }
  ul { list-style: none; }

  .map { position: relative; height: 300px; overflow: hidden; background: #ddd; font: 12px/17px "Liberation Sans", Arial, sans-serif; }
  .tiles { display: block; width: 100%; height: 100%; }
  .foot { fill: none; stroke: #fa8072; stroke-width: 4; stroke-dasharray: 6 6; opacity: .8; }
  .line { fill: none; stroke-linecap: round; stroke-linejoin: round; }
  .tiles text { font-family: "Noto Sans", sans-serif; text-anchor: middle; paint-order: stroke; stroke: #fff; stroke-opacity: .75; stroke-width: 6px; stroke-linejoin: round; }
  .street-name { font-size: 26px; fill: #222; }
  .street-name.large { font-size: 30px; }
  .tiles .street-name.large text { stroke: #f7fabf; }
  .place-name { font-size: 29px; font-style: italic; }
  .school-name { fill: #5f5f2c; }
  .park-name { fill: #2a7a3c; }
  .works-name { fill: #6d4468; font-size: 32px; }
  .water-name { fill: #4d80b3; }
  .area-name { fill: #777; font-style: normal; }
  .district { font-size: 42px; fill: #777; }
  .station { font-size: 33px; font-weight: 700; fill: #3849a3; }

  .zoom { position: absolute; top: 10px; left: 10px; display: grid; border: 2px solid rgba(0, 0, 0, .2); border-radius: 4px; background-clip: padding-box; }
  .zoom button { width: 30px; height: 30px; padding: 0; border: 0; background: #fff; color: #000; font: bold 22px/30px "Liberation Sans", Arial, sans-serif; border-radius: 0 0 2px 2px; }
  .zoom button:first-child { border-bottom: 1px solid #ccc; border-radius: 2px 2px 0 0; }
  .marker { position: absolute; width: 25px; height: 41px; left: calc(50% - 12px); top: 109px; z-index: 1; }
  .marker-shadow { position: absolute; width: 41px; height: 41px; left: calc(50% - 2px); top: 109px; }
  .popup {
    position: absolute;
    z-index: 2;
    left: 50%;
    top: 41px;
    transform: translateX(-50%);
    display: grid;
    padding: 14px 22px 14px 20px;
    border-radius: 12px;
    background: #fff;
    color: #333;
    white-space: nowrap;
    box-shadow: 0 3px 14px rgba(0, 0, 0, .4);
  }
  .popup::after { content: ""; position: absolute; left: calc(50% - 12px); top: 100%; border: 12px solid transparent; border-top: 11px solid #fff; border-bottom: 0; }
  .popup button { position: absolute; right: 0; top: 0; width: 24px; height: 24px; padding: 0; border: 0; background: none; color: #b5b5b5; font: bold 18px/24px "Liberation Sans", Arial, sans-serif; }
  .credit { position: absolute; z-index: 2; right: 0; bottom: 0; padding: 0 5px; background: rgba(255, 255, 255, .8); color: #333; font-size: 11px; line-height: 16px; }
  .credit a { color: #0078a8; }

  .bar { grid-row: 1; display: grid; grid-template-rows: 17px 1fr 17px; justify-items: center; position: relative; }
  .inner { grid-column: 2; color: #656c76; }
  .outer { grid-column: 3; background: #f0f0f0; color: #505050; }
  .bar i { display: block; }
  .up, .down { align-self: center; border: 4px solid transparent; }
  .up { border-top: 0; border-bottom-color: currentColor; }
  .down { grid-row: 3; border-bottom: 0; border-top-color: currentColor; }
  .inner .up { opacity: .4; }
  .thumb { width: 13px; background: #c1c1c1; }
  .inner .thumb { height: 362px; background: #80868f; }
  .outer .thumb { height: 17px; margin-top: 18px; }
</style>
